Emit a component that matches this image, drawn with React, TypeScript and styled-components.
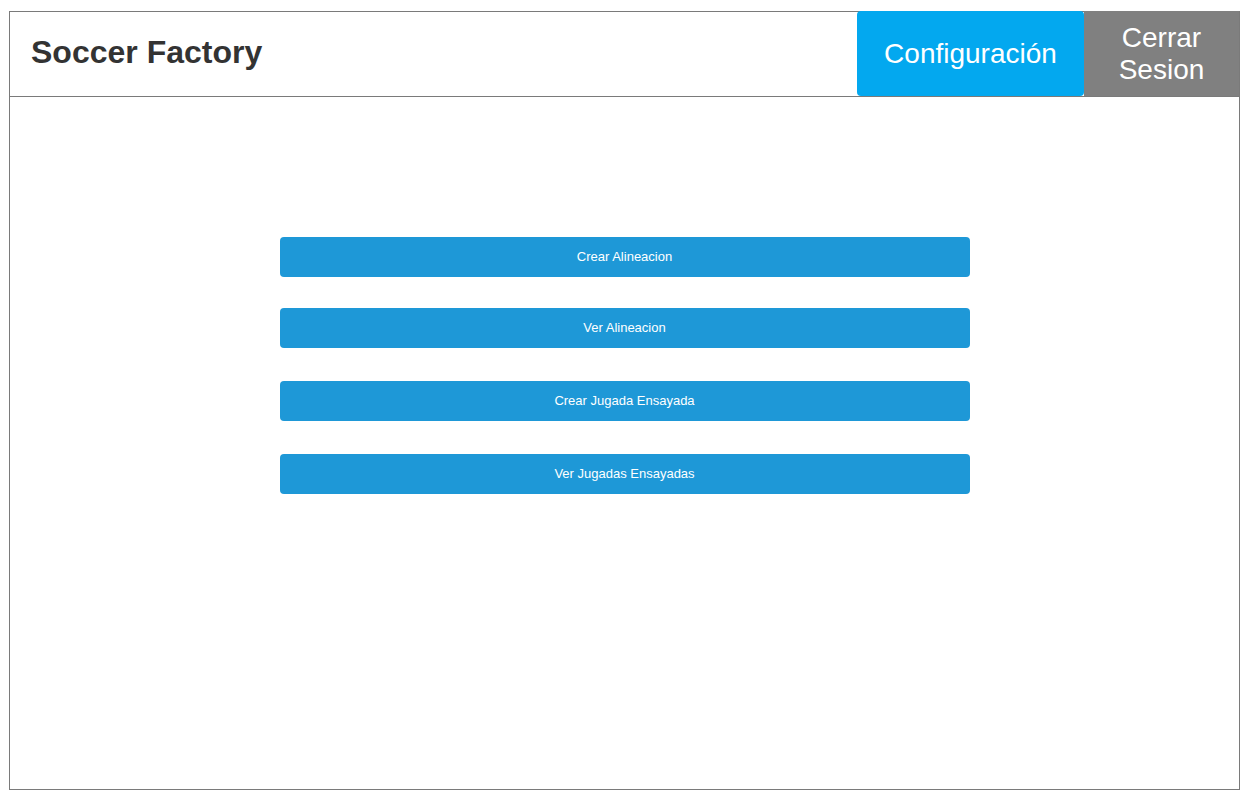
import React from "react";
import styled, { createGlobalStyle } from "styled-components";

const Global = createGlobalStyle`
  html, body { margin: 0; padding: 0; background: #ffffff; }
  body { font-family: "Liberation Sans", Arial, sans-serif; }
`;

const Frame = styled.div`
  box-sizing: border-box;
  margin: 11px 0 0 9px;
  width: 1231px;
  height: 779px;
  border: 1px solid #7a7a7a;
  display: flex;
  flex-direction: column;
`;

const Header = styled.header`
  box-sizing: border-box;
  height: 85px;
  border-bottom: 1px solid #7a7a7a;
  display: flex;
  align-items: stretch;
`;

const Title = styled.h1`
  flex: 1;
  margin: 0;
  padding: 0 0 3px 21px;
  display: flex;
  align-items: center;
  font-size: 32px;
  font-weight: 700;
  color: #333333;
  font-family: "Liberation Sans", Arial, sans-serif;
`;

const HeaderButton = styled.button<{ $bg: string; $w: number; $radius?: string }>`
  box-sizing: border-box;
  margin-top: -1px;
  height: 85px;
  width: ${(p) => p.$w}px;
  border: none;
  border-radius: ${(p) => p.$radius ?? "0"};
  background: ${(p) => p.$bg};
  color: #ffffff;
  font-family: "Liberation Sans", Arial, sans-serif;
  font-size: 28px;
  line-height: 32px;
  padding: 0 8px;
  text-align: center;
  cursor: pointer;
`;

const Main = styled.main`
  flex: 1;
  display: flex;
  flex-direction: column;
  align-items: center;
  padding-top: 140px;
  gap: 33px;
`;

const ActionButton = styled.button`
  width: 690px;
  height: 40px;
  border: none;
  border-radius: 4px;
  background: #1e98d7;
  color: #ffffff;
  font-family: "Liberation Sans", Arial, sans-serif;
  font-size: 13px;
  padding: 0 0 2px;
  cursor: pointer;

  &:first-child {
    margin-bottom: -2px;
  }
`;

const actions = [
  "Crear Alineacion",
  "Ver Alineacion",
  "Crear Jugada Ensayada",
  "Ver Jugadas Ensayadas",
];

export default function App() {
  return (
    <>
      <Global />
      <Frame>
        <Header>
          <Title>Soccer Factory</Title>
          <HeaderButton $bg="#03a8ef" $w={227} $radius="4px">
            Configuración
          </HeaderButton>
          <HeaderButton $bg="#808080" $w={155}>
            Cerrar
            <br />
            Sesion
          </HeaderButton>
        </Header>
        <Main>
          {actions.map((a) => (
            <ActionButton key={a}>{a}</ActionButton>
          ))}
        </Main>
      </Frame>
    </>
  );
}
